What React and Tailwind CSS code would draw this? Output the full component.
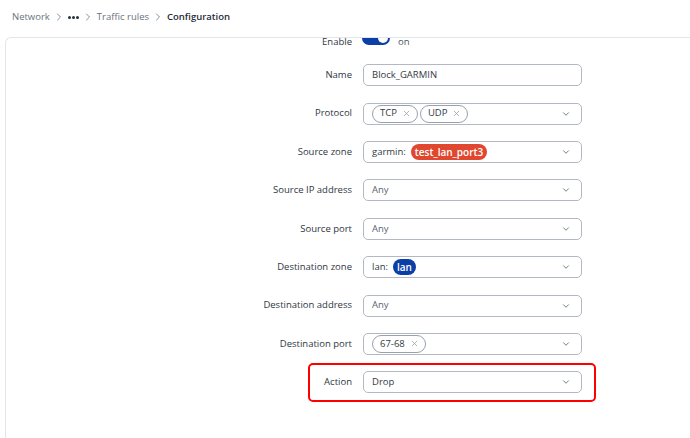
import { ChevronDown, ChevronRight, X } from 'lucide-react'

const FONT = { fontFamily: '"Open Sans", "Noto Sans", Arial, sans-serif' }

function Chevron() {
  return <ChevronDown className="ml-auto mr-[10px] h-[10px] w-[10px] shrink-0 text-[#5b6270]" strokeWidth={2} />
}

function Chip({ children }) {
  return (
    <span className="flex h-[18px] items-center gap-[5px] rounded-full border border-[#9aa1ad] pl-[7px] pr-[6px] text-[9.5px] text-[#333a45]">
      {children}
      <X className="h-[9px] w-[9px] text-[#8a909b]" strokeWidth={1.8} />
    </span>
  )
}

function Pill({ color, children }) {
  return (
    <span className={`flex h-[16px] items-center rounded-full px-[4px] text-[10px] font-semibold leading-none text-white ${color}`}>
      {children}
    </span>
  )
}

function Field({ children, select = true }) {
  return (
    <div className="flex h-[22px] w-[219px] shrink-0 items-center rounded-[5px] border border-[#b3b9c4] bg-white text-[9.5px] text-[#333a45]">
      <div className="flex items-center gap-[2px] pl-[8px]">{children}</div>
      {select && <Chevron />}
    </div>
  )
}

function Row({ label, children }) {
  return (
    <div className="flex h-[38.4px] items-center">
      <div className="w-[346px] shrink-0 text-right text-[9.5px] text-[#2f3742]">{label}</div>
      <div className="ml-[11px]">{children}</div>
    </div>
  )
}

function Crumb() {
  return <ChevronRight className="mx-[3px] mt-[1px] h-[12px] w-[12px] text-[#6b7280]" strokeWidth={1.6} />
}

export default function App() {
  return (
    <div className="flex h-[438px] w-[690px] flex-col overflow-hidden bg-white" style={FONT}>
      <div className="flex h-[37px] items-start pl-[12px] pt-[10px] text-[9.5px] leading-[14px] text-[#6b7280]">
        <span>Network</span>
        <Crumb />
        <span className="mt-[6px] flex gap-[1px]">
          <span className="h-[3px] w-[3px] rounded-full bg-[#27303c]" />
          <span className="h-[3px] w-[3px] rounded-full bg-[#27303c]" />
          <span className="h-[3px] w-[3px] rounded-full bg-[#27303c]" />
        </span>
        <Crumb />
        <span>Traffic rules</span>
        <Crumb />
        <span className="font-semibold text-[#1f2a3a]">Configuration</span>
      </div>

      <div className="ml-[5px] flex-1 rounded-tl-[6px] border-l border-t border-[#e2e5ea]">
        <div className="flex flex-col">
          {/* top of the toggle is scrolled under the card edge */}
          <div className="mb-[10px] flex h-[8px] items-start">
            <div className="w-[346px] shrink-0 text-right text-[9.5px] leading-[8px] text-[#2f3742]">Enable</div>
            <div className="ml-[10px] flex items-start">
              <span className="h-[7px] w-[28px] overflow-hidden">
                <span className="-mt-[7px] flex h-[14px] w-[28px] items-center justify-end rounded-full bg-[#0b3ea6] pr-[2px]">
                  <span className="h-[10px] w-[10px] rounded-full bg-white" />
                </span>
              </span>
              <span className="ml-[8px] text-[9.5px] leading-[8px] text-[#4b5360]">on</span>
            </div>
          </div>

          <Row label="Name">
            <Field select={false}>Block_GARMIN</Field>
          </Row>
          <Row label="Protocol">
            <Field>
              <Chip>TCP</Chip>
              <Chip>UDP</Chip>
            </Field>
          </Row>
          <Row label="Source zone">
            <Field>
              <span className="mr-[3px]">garmin:</span>
              <Pill color="bg-[#e0472f]">test_lan_port3</Pill>
            </Field>
          </Row>
          <Row label="Source IP address">
            <Field><span className="text-[#5c6370]">Any</span></Field>
          </Row>
          <Row label="Source port">
            <Field><span className="text-[#5c6370]">Any</span></Field>
          </Row>
          <Row label="Destination zone">
            <Field>
              <span className="mr-[3px]">lan:</span>
              <Pill color="bg-[#0b3ea6]">lan</Pill>
            </Field>
          </Row>
          <Row label="Destination address">
            <Field><span className="text-[#5c6370]">Any</span></Field>
          </Row>
          <Row label="Destination port">
            <Field>
              <Chip>67-68</Chip>
            </Field>
          </Row>

          <div className="ml-[302px] flex h-[38.4px] w-[288px] items-center rounded-[5px] border-2 border-[#ff0000]">
            <div className="w-[42px] shrink-0 text-right text-[9.5px] text-[#2f3742]">Action</div>
            <div className="ml-[11px]">
              <Field><span>Drop</span></Field>
            </div>
          </div>
        </div>
      </div>
    </div>
  )
}
